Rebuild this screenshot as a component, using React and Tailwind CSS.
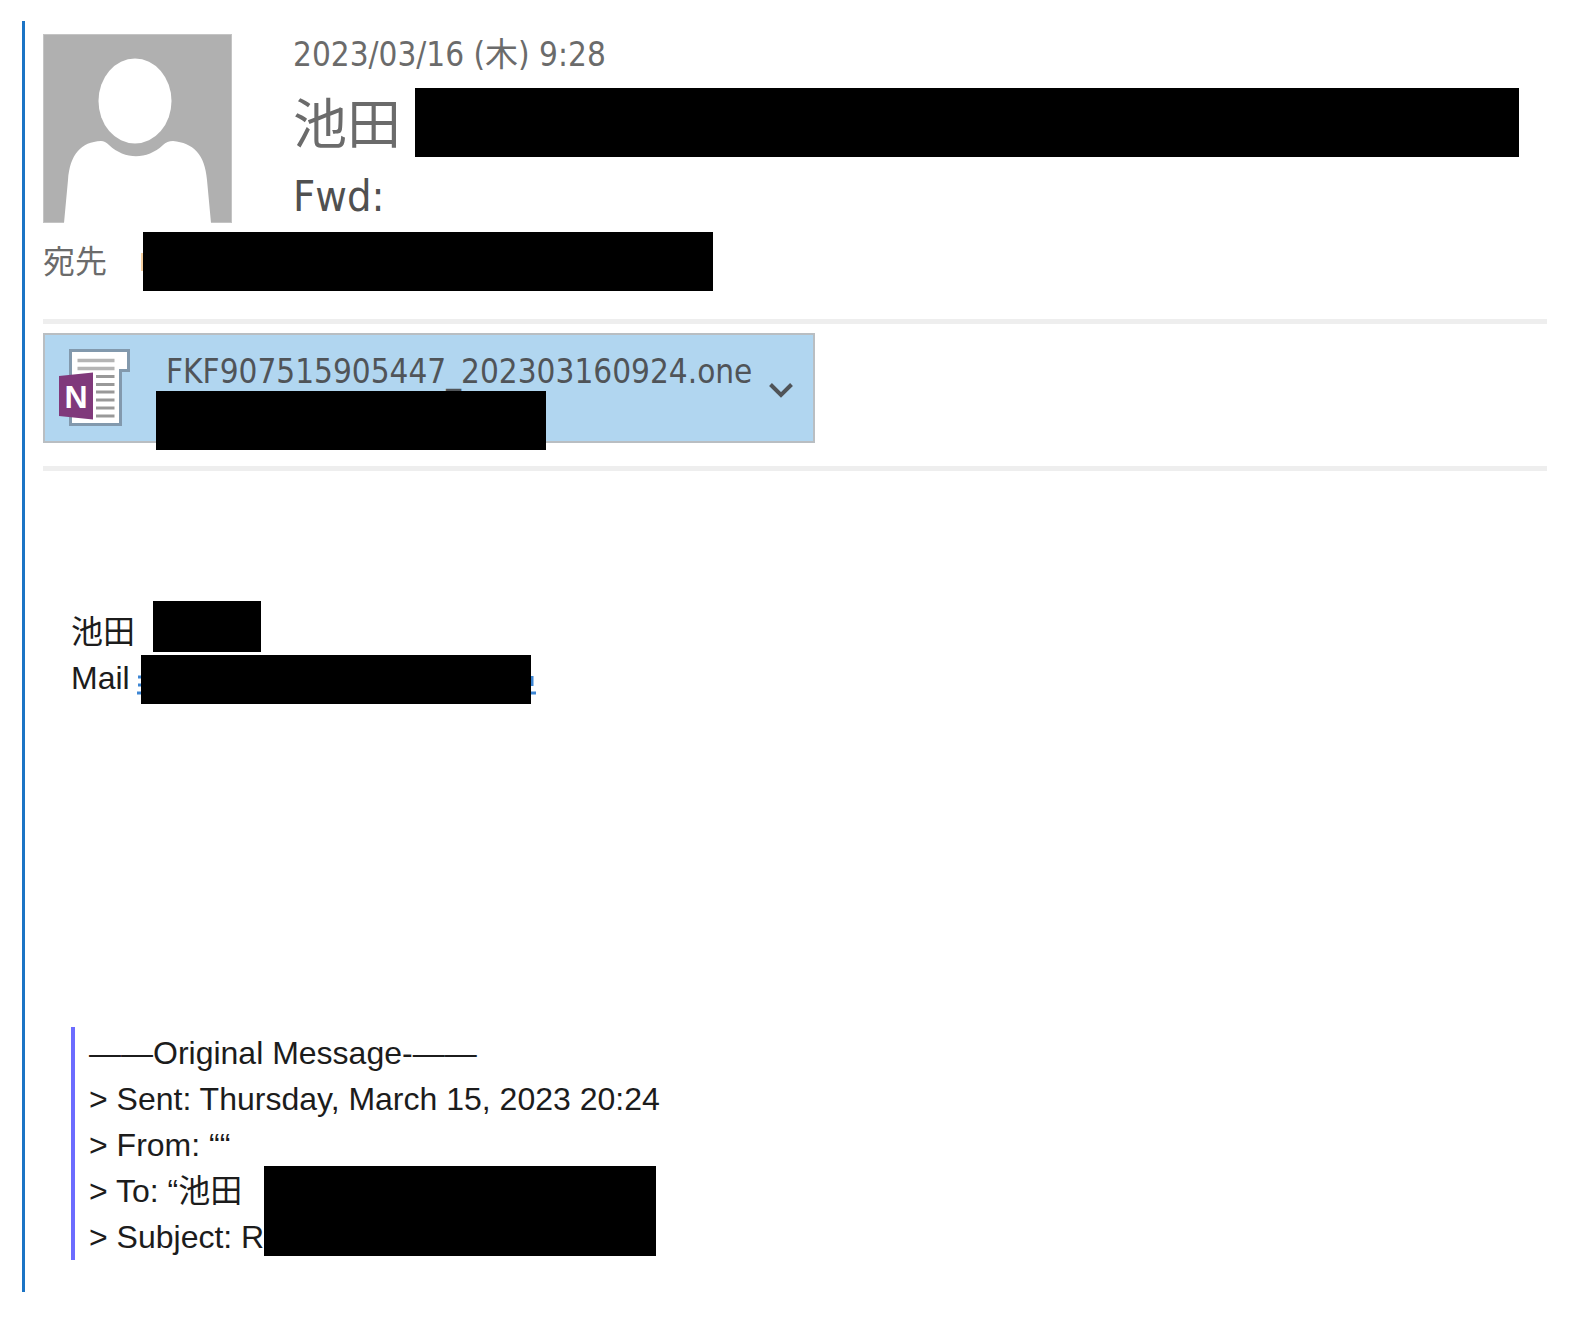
function Redaction({ className }) {
  return <span aria-hidden="true" className={`block bg-black ${className}`} />;
}

function Avatar() {
  return (
    <svg viewBox="0 0 189 189" className="size-[189px] shrink-0" role="img" aria-label="Sender">
      <rect width="189" height="189" fill="#b0b0b0" />
      <rect x="0.5" y="0.5" width="188" height="188" fill="none" stroke="#c4c4c4" />
      <ellipse cx="92" cy="67" rx="36.500" ry="42.500" fill="#fff" />
      <path
        d="M21 189 L25 146 C27 120 38 108 58 107 Q62 107 66 111 C82 126 104 126 120 111 Q124 107 130 107 C150 109 162 120 164 146 L168 189 Z"
        fill="#fff"
      />
    </svg>
  );
}

function OneNoteIcon() {
  return (
    <svg viewBox="0 0 74 80" className="h-20 w-[74px] shrink-0" aria-hidden="true">
      <path d="M12.500 2.500 H70.500 V22.500 H62.500 V76.500 H12.500 Z" fill="#fff" stroke="#8299ad" strokeWidth="3" />
      <path d="M19.500 12.500 H56.500 M19.500 20.500 H56.500" stroke="#b4b4b4" strokeWidth="3.500" />
      <path
        d="M38 28.500 H56.500 M38 36.500 H56.500 M38 44 H56.500 M38 52 H56.500 M38 60 H56.500 M38 68 H56.500"
        stroke="#999"
        strokeWidth="3"
      />
      <path d="M1 28 L35 24.500 V71.500 L1 68 Z" fill="#80397b" />
      <text x="18" y="60" textAnchor="middle" fontFamily="Liberation Sans, sans-serif" fontWeight="700" fontSize="32" fill="#fff">
        N
      </text>
    </svg>
  );
}

const UI_FONT = "font-['DejaVu_Sans_Condensed','Noto_Sans_CJK_JP',sans-serif]";
const BODY_FONT = "font-['Liberation_Sans','Noto_Sans_CJK_JP',sans-serif]";

export default function App() {
  return (
    <div className="bg-white pt-[21px] pr-12 pb-7 pl-[22px]">
      <main className={`border-l-[3px] border-[#1b74c5] pt-[13px] pb-8 pl-[18px] text-[#6b6b6b] ${UI_FONT}`}>
        <header>
          <div className="flex gap-[61px]">
            <Avatar />
            <div className="min-w-0 flex-1">
              <time className="block h-10 text-[33px] leading-[42px]">2023/03/16 (木) 9:28</time>
              <div className="mt-[14px] mr-7 flex h-[69px] items-center gap-[14px]">
                <h2 className="pt-1.5 text-[54px] leading-[69px] font-normal">池田</h2>
                <Redaction className="h-full flex-1" />
              </div>
              <h1 className="mt-[9px] h-[57px] text-[43px] leading-[60px] text-[#505050]">Fwd:</h1>
            </div>
          </div>
          <div className="mt-[9px] flex h-[59px] items-center">
            <span className="w-[98px] pt-0.5 text-[32px] leading-[59px]">宛先</span>
            <span className="h-[18px] w-0.5 bg-[#f5cfa0]" />
            <Redaction className="h-full w-[570px]" />
          </div>
        </header>

        <section className="mt-7 border-y-[5px] border-[#eee] pt-[9px] pb-[23px]">
          <button
            type="button"
            className="relative flex h-[110px] w-[772px] border-2 border-[#b9bec2] bg-[#b1d6f0] pt-[13px] pl-[13px] text-left text-[#505458]"
          >
            <OneNoteIcon />
            <span className="ml-[34px] text-[33px] leading-[48px]">FKF907515905447_202303160924.one</span>
            <svg viewBox="0 0 26 16" className="absolute top-[47px] right-[19px] h-4 w-[26px]" aria-hidden="true">
              <path d="M2.500 2.500 L13 13 L23.500 2.500" fill="none" stroke="#505458" strokeWidth="4" />
            </svg>
            <Redaction className="absolute top-14 left-[111px] h-[59px] w-[390px]" />
          </button>
        </section>

        <section className={`mt-[130px] pl-7 text-[32px] leading-[46px] text-[#1c1c1c] ${BODY_FONT}`}>
          <div className="flex h-[51px] items-end gap-[18px]">
            <p className="leading-[40px]">池田</p>
            <Redaction className="h-full w-[108px]" />
          </div>
          <div className="mt-[3px] flex h-[49px]">
            <p className="w-[65px]">Mail</p>
            <a href="#mail" aria-label="Mail address" className="flex h-full items-end">
              <svg viewBox="0 0 5 49" className="h-[49px] w-[5px]" aria-hidden="true">
                <path d="M2 22 H5 M2 30 H5 M1 38 H5" stroke="#3d86d4" strokeWidth="3" />
              </svg>
              <Redaction className="h-full w-[390px]" />
              <svg viewBox="0 0 5 49" className="h-[49px] w-[5px]" aria-hidden="true">
                <path d="M1 21 V31 M0 38 H5" fill="none" stroke="#3d86d4" strokeWidth="3" />
              </svg>
            </a>
          </div>

          <blockquote className="relative mt-[323px] border-l-4 border-[#6c6cff] pt-[3px] pl-[14px]">
            <p>――Original Message-――</p>
            <p>&gt; Sent: Thursday, March 15, 2023 20:24</p>
            <p>&gt; From: ““</p>
            <p>&gt; To: “池田</p>
            <p>&gt; Subject: Re</p>
            <Redaction className="absolute bottom-1 left-[189px] h-[90px] w-[392px]" />
          </blockquote>
        </section>
      </main>
    </div>
  );
}
